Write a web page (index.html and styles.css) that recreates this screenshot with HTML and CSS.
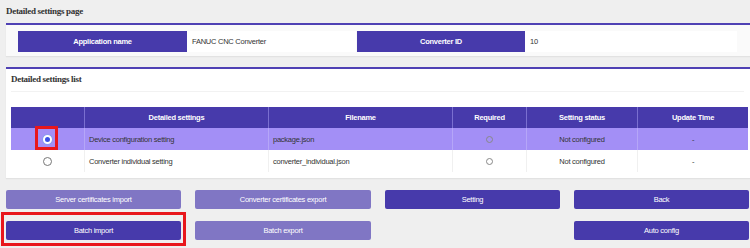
FILE: index.html
```html
<!DOCTYPE html>
<html>
<head>
<link rel="stylesheet" href="styles.css">
</head>
<body>
<div class="page">
    <div class="page-title">Detailed settings page</div>

    <div class="panel info-panel">
        <div class="info-row">
            <div class="info-label w1">Application name</div>
            <div class="info-value w1">FANUC CNC Converter</div>
            <div class="info-label w2">Converter ID</div>
            <div class="info-value w3">10</div>
        </div>
    </div>

    <div class="panel list-panel">
        <div class="list-title">Detailed settings list</div>
        <table class="settings">
            <tr>
                <th class="c1"></th>
                <th class="c2">Detailed settings</th>
                <th class="c3">Filename</th>
                <th class="c4">Required</th>
                <th class="c5">Setting status</th>
                <th class="c6">Update Time</th>
            </tr>
            <tr class="selected">
                <td class="center"><span class="radio checked"></span></td>
                <td>Device configuration setting</td>
                <td>package.json</td>
                <td class="center"><span class="req"></span></td>
                <td class="center">Not configured</td>
                <td class="center">-</td>
            </tr>
            <tr>
                <td class="center"><span class="radio"></span></td>
                <td>Converter individual setting</td>
                <td>converter_individual.json</td>
                <td class="center"><span class="req"></span></td>
                <td class="center">Not configured</td>
                <td class="center">-</td>
            </tr>
        </table>
    </div>

    <div class="buttons">
        <div class="btn light">Server certificates import</div>
        <div class="btn light">Converter certificates export</div>
        <div class="btn">Setting</div>
        <div class="btn">Back</div>
        <div class="btn">Batch import</div>
        <div class="btn light">Batch export</div>
        <div></div>
        <div class="btn">Auto config</div>
    </div>

    <!-- red annotation boxes -->
    <div class="mark mark-radio"></div>
    <div class="mark mark-batch"></div>
</div>
</body>
</html>
```

FILE: styles.css
```css
body {
    margin: 0;
    background: #efefef;
    font-family: "Liberation Sans", Arial, sans-serif;
    font-size: 7.5px;
    letter-spacing: -0.25px;
    color: #333;
}

.page {
    position: relative;
    width: 750px;
    height: 248px;
    overflow: hidden;
}

.page-title {
    font-family: "Liberation Serif", "Times New Roman", serif;
    font-weight: bold;
    font-size: 9px;
    letter-spacing: -0.3px;
    color: #333;
    height: 23px;
    line-height: 22px;
    padding-left: 6px;
}

.panel {
    margin-left: 6px;
    border-top: 2px solid #4f41b4;
    background: #fafafa;
}

.info-panel {
    height: 33px;
    padding: 6px 13px 0 12px;
    box-sizing: border-box;
    box-shadow: 0 1px 1px #e2e2e2;
}

.info-row {
    display: flex;
    height: 21px;
}

.info-label {
    background: #473aab;
    color: #fff;
    font-weight: bold;
    text-align: center;
    line-height: 21px;
}

.info-value {
    background: #fff;
    line-height: 21px;
    padding-left: 5px;
    box-sizing: border-box;
}

.w1 { width: 169px; }
.w2 { width: 168px; margin-left: 1px; }
.w3 { width: 212px; }

.list-panel {
    margin-top: 11px;
    background: #fff;
    padding: 0 6px 6px 5px;
    box-shadow: 0 1px 1px #e2e2e2;
}

.list-title {
    font-family: "Liberation Serif", "Times New Roman", serif;
    font-weight: bold;
    font-size: 9px;
    letter-spacing: -0.3px;
    height: 22px;
    line-height: 21px;
    border-bottom: 1px solid #f2f2f2;
    margin-bottom: 15px;
}

.settings {
    border-collapse: collapse;
    width: 733px;
    table-layout: fixed;
}

.settings th {
    background: #473aab;
    color: #fff;
    font-weight: bold;
    height: 21px;
    padding: 0;
    border-left: 1px solid #7a6fd0;
}

.settings th:first-child,
.settings td:first-child {
    border-left: none;
}

.settings td {
    height: 22px;
    padding: 0 0 0 4px;
    border-left: 1px solid #f0f0f0;
    white-space: nowrap;
}

.settings td.center {
    text-align: center;
    padding: 0;
}

.settings tr.selected td {
    background: #a38ff6;
    border-left-color: #b5a6f8;
}

.c1 { width: 73px; }
.c2 { width: 183px; }
.c3 { width: 183px; }
.c4 { width: 73px; }
.c5 { width: 110px; }
.c6 { width: 110px; }

.radio {
    display: inline-block;
    width: 9px;
    height: 9px;
    border: 1px solid #777;
    border-radius: 50%;
    background: #fff;
    vertical-align: middle;
    box-sizing: border-box;
}

.radio.checked {
    border: 2px solid #fff;
    background: #3a51e6;
    box-shadow: 0 0 0 1px #8c9cf0;
}

.req {
    display: inline-block;
    width: 7px;
    height: 7px;
    border: 1px solid #888;
    border-radius: 50%;
    vertical-align: middle;
    box-sizing: border-box;
}

.buttons {
    display: grid;
    grid-template-columns: 175px 176px 175px 175px;
    column-gap: 14px;
    row-gap: 12px;
    padding: 12px 0 0 6px;
}

.btn {
    height: 19px;
    line-height: 19px;
    text-align: center;
    color: #fff;
    background: #473aab;
    border-radius: 2px;
    font-size: 7.5px;
}

.btn.light {
    background: #8076c4;
}

.mark {
    position: absolute;
    border: 3px solid #e8171c;
    box-sizing: border-box;
}

.mark-radio {
    left: 35px;
    top: 126px;
    width: 23px;
    height: 24px;
}

.mark-batch {
    left: 1px;
    top: 212px;
    width: 185px;
    height: 34px;
}
```
